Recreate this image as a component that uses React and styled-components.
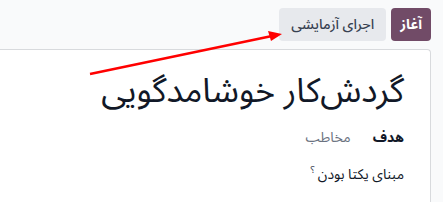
import React from "react";
import styled, { createGlobalStyle } from "styled-components";

const Global = createGlobalStyle`
  html, body {
    margin: 0;
    padding: 0;
    background: #f9fafb;
    font-family: "Noto Sans Arabic", "Noto Sans", Roboto, sans-serif;
  }
`;

const Page = styled.div`
  position: relative;
  width: 443px;
  height: 202px;
  overflow: hidden;
  direction: rtl;
  background: #f9fafb;
`;

const ControlPanel = styled.div`
  display: flex;
  gap: 5px;
  height: 49px;
  box-sizing: border-box;
  padding: 8px 12px 0 0;
`;

const Button = styled.button`
  height: 33px;
  box-sizing: border-box;
  border: none;
  border-radius: 4px;
  padding: 0 ${(p) => (p.$primary ? "9px" : "12px")};
  font-family: inherit;
  font-size: 14px;
  font-weight: ${(p) => (p.$primary ? 700 : 500)};
  color: ${(p) => (p.$primary ? "#fff" : "#374151")};
  background: ${(p) => (p.$primary ? "#714b67" : "#e7e9ed")};
  cursor: pointer;
`;

const Sheet = styled.div`
  margin-right: 12px;
  height: 160px;
  background: #fff;
  border-top: 1px solid #d8dadd;
  border-right: 1px solid #d8dadd;
  border-top-right-radius: 4px;
  padding: 19px 26px 0 0;
  box-sizing: border-box;
`;

const Title = styled.h1`
  margin: 0;
  font-size: 34px;
  font-weight: 400;
  color: #111827;
  line-height: 44px;
`;

const FieldRow = styled.div`
  display: flex;
  gap: 22px;
  align-items: baseline;
  margin-top: ${(p) => p.$top || 0}px;
  font-size: 14px;
  line-height: 20px;
`;

const Label = styled.span`
  font-weight: 700;
  color: #111827;
`;

const Value = styled.span`
  color: #6b7280;
`;

const Question = styled.span`
  color: #111827;
`;

const Help = styled.sup`
  font-size: 10px;
  color: #374151;
  margin-right: 3px;
`;

const Arrow = styled.svg`
  position: absolute;
  left: 0;
  top: 0;
  pointer-events: none;
`;

export default function App() {
  return (
    <Page>
      <Global />
      <ControlPanel>
        <Button $primary>آغاز</Button>
        <Button>اجرای آزمایشی</Button>
      </ControlPanel>
      <Sheet>
        <Title>گردش‌کار خوشامدگویی</Title>
        <FieldRow $top={15}>
          <Label>هدف</Label>
          <Value>مخاطب</Value>
        </FieldRow>
        <FieldRow $top={12}>
          <Question>
            مبنای یکتا بودن
            <Help>؟</Help>
          </Question>
        </FieldRow>
      </Sheet>
      <Arrow width="443" height="202">
        <line x1="90" y1="74" x2="272" y2="36" stroke="#ff0000" strokeWidth="2.5" />
        <polygon points="282,34 268,31 271,41" fill="#ff0000" />
      </Arrow>
    </Page>
  );
}
